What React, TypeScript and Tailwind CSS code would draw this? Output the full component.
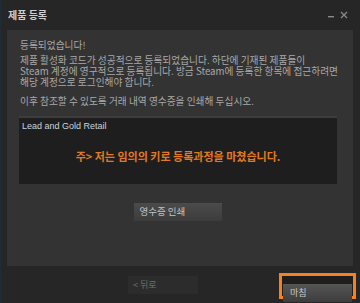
import React from "react"

const font = { fontFamily: '"Noto Sans CJK KR", "Liberation Sans", sans-serif' }

export default function App() {
  return (
    <div
      className="w-[360px] h-[303px] bg-[#262626] border-l border-[#1f2c38] flex flex-col overflow-hidden"
      style={font}
    >
      <div className="h-[30px] flex items-center justify-between pl-[7px] pr-[12px]">
        <span className="text-[10px] font-bold text-[#cfcfcf] leading-none">제품 등록</span>
        <div className="flex items-center gap-[6px]">
          <svg width="6" height="6" viewBox="0 0 6 6">
            <rect x="0" y="4" width="6" height="1.4" fill="#8a8a8a" />
          </svg>
          <svg width="8" height="8" viewBox="0 0 8 8">
            <path d="M1 1L7 7M7 1L1 7" stroke="#8a8a8a" strokeWidth="1.3" />
          </svg>
        </div>
      </div>

      <div className="ml-[6px] mr-[7px] h-[236px] bg-[#333333] px-[13px] pt-[9px] text-[9.7px] text-[#a9a9a9] whitespace-nowrap">
        <p className="leading-[13px]">등록되었습니다!</p>
        <p className="mt-[3px] leading-[11px]">
          제품 활성화 코드가 성공적으로 등록되었습니다. 하단에 기재된 제품들이
          <br />
          Steam 계정에 영구적으로 등록됩니다. 방금 Steam에 등록한 항목에 접근하려면
          <br />
          해당 계정으로 로그인해야 합니다.
        </p>
        <p className="mt-[7px] leading-[13px]">이후 참조할 수 있도록 거래 내역 영수증을 인쇄해 두십시오.</p>

        <div className="mt-[8px] -ml-[1px] w-[318px] h-[68px] bg-[#1e1e1e] border-t-2 border-[#3d3d3d] flex flex-col">
          <div
            className="px-[3px] pt-[2px] text-[9px] text-[#c9d3dc] leading-[12px]"
            style={{ fontFamily: '"Liberation Sans", sans-serif' }}
          >
            Lead and Gold Retail
          </div>
          <div className="flex-1 flex items-center justify-center pb-[4px]">
            <span className="text-[11px] font-bold text-[#e27a22]">주&gt; 저는 임의의 키로 등록과정을 마쳤습니다.</span>
          </div>
        </div>

        <div className="mt-[19px] flex justify-center pr-[5px]">
          <button className="w-[88px] h-[18px] bg-gradient-to-b from-[#4b4b4b] to-[#3c3c3c] text-left pl-[6px] text-[9.5px] text-[#c4c4c4] leading-none">
            영수증 인쇄
          </button>
        </div>
      </div>

      <div className="flex justify-end items-center gap-[81px] pt-[7px] pr-[4px]">
        <button className="w-[70px] h-[18px] bg-[#2c2c2c] text-left pl-[5px] text-[9px] text-[#6e6e6e] leading-none -mt-[3px]">
          &lt; 뒤로
        </button>
        <div className="w-[77px] h-[26px] border-[3px] border-[#f58220] bg-[#1e1e1e] p-[1px]">
          <button className="w-full h-full bg-gradient-to-b from-[#555555] to-[#3d3d3d] text-left pl-[7px] text-[9px] text-[#c8c8c8] leading-none">
            마침
          </button>
        </div>
      </div>
    </div>
  )
}
